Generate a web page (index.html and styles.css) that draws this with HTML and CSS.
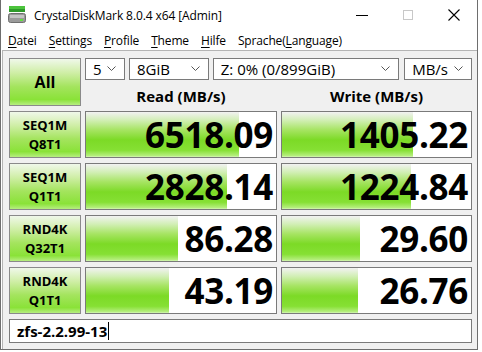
FILE: index.html
```html
<!DOCTYPE html>
<html>
<head>
<meta charset="utf-8">
<link rel="stylesheet" href="styles.css">
</head>
<body>
<div class="window">
  <div class="titlebar">
    <svg class="appicon" width="18" height="17" viewBox="0 0 18 17">
      <rect x="1" y="0" width="16" height="3" fill="#4cc43c"/>
      <rect x="1" y="3" width="16" height="3" fill="#2e9a2a"/>
      <rect x="0.5" y="7.5" width="17" height="9" rx="2" fill="#9a9a9a" stroke="#707070"/>
      <rect x="2" y="9" width="14" height="3" fill="#c4c4c4"/>
      <rect x="12" y="13" width="3" height="2" fill="#60e040"/>
    </svg>
    <span class="title">CrystalDiskMark 8.0.4 x64 [Admin]</span>
    <div class="controls">
      <svg width="46" height="30" viewBox="0 0 46 30"><line x1="17" y1="15.5" x2="29" y2="15.5" stroke="#000" stroke-width="1"/></svg>
      <svg width="46" height="30" viewBox="0 0 46 30"><rect x="18.5" y="10.5" width="9" height="9" fill="none" stroke="#c8c8c8"/></svg>
      <svg width="46" height="30" viewBox="0 0 46 30"><path d="M17.5 9.5 L28.5 20.5 M28.5 9.5 L17.5 20.5" stroke="#000" stroke-width="1.1"/></svg>
    </div>
  </div>
  <div class="menubar">
    <span><u>D</u>atei</span>
    <span><u>S</u>ettings</span>
    <span><u>P</u>rofile</span>
    <span><u>T</u>heme</span>
    <span><u>H</u>ilfe</span>
    <span>Sprache(<u>L</u>anguage)</span>
  </div>
  <div class="client">
    <div class="grid">
      <div class="btn all">All</div>
      <div class="top">
        <div class="selects">
          <div class="select w5"><span>5</span><svg class="chev" width="9" height="6" viewBox="0 0 9 6"><path d="M0.5 0.5 L4.5 4.5 L8.5 0.5" fill="none" stroke="#555"/></svg></div>
          <div class="select w8"><span>8GiB</span><svg class="chev" width="9" height="6" viewBox="0 0 9 6"><path d="M0.5 0.5 L4.5 4.5 L8.5 0.5" fill="none" stroke="#555"/></svg></div>
          <div class="select wz"><span>Z: 0% (0/899GiB)</span><svg class="chev" width="9" height="6" viewBox="0 0 9 6"><path d="M0.5 0.5 L4.5 4.5 L8.5 0.5" fill="none" stroke="#555"/></svg></div>
          <div class="select wu"><span>MB/s</span><svg class="chev" width="9" height="6" viewBox="0 0 9 6"><path d="M0.5 0.5 L4.5 4.5 L8.5 0.5" fill="none" stroke="#555"/></svg></div>
        </div>
        <div class="heads">
          <div class="head">Read (MB/s)</div>
          <div class="head">Write (MB/s)</div>
        </div>
      </div>

      <div class="btn lbl"><span>SEQ1M</span><span>Q8T1</span></div>
      <div class="val" style="background-size:153px 100%">6518.09</div>
      <div class="val" style="background-size:131px 100%">1405.22</div>

      <div class="btn lbl"><span>SEQ1M</span><span>Q1T1</span></div>
      <div class="val" style="background-size:141px 100%">2828.14</div>
      <div class="val" style="background-size:129px 100%">1224.84</div>

      <div class="btn lbl"><span>RND4K</span><span>Q32T1</span></div>
      <div class="val" style="background-size:92px 100%">86.28</div>
      <div class="val" style="background-size:78px 100%">29.60</div>

      <div class="btn lbl"><span>RND4K</span><span>Q1T1</span></div>
      <div class="val" style="background-size:83px 100%">43.19</div>
      <div class="val" style="background-size:76px 100%">26.76</div>

      <div class="comment">zfs-2.2.99-13<span class="caret"></span></div>
    </div>
  </div>
</div>
</body>
</html>
```
FILE: styles.css
```css
* { box-sizing: border-box; }
html, body { margin: 0; padding: 0; background: #ffffff; }
body { font-family: "Open Sans", "Noto Sans", sans-serif; color: #000; }

.window {
  width: 478px;
  height: 350px;
  border: 1px solid #6e6e6e;
  border-top: none;
  background: #fff;
  display: flex;
  flex-direction: column;
}

.titlebar {
  height: 30px;
  display: flex;
  align-items: center;
  padding-left: 7px;
}
.appicon { margin-top: -1px; }
.title {
  font-size: 12px;
  margin-left: 8px;
  letter-spacing: -0.1px;
}
.controls {
  margin-left: auto;
  display: flex;
  height: 30px;
}

.menubar {
  height: 20px;
  display: flex;
  align-items: center;
  font-size: 12px;
  padding-left: 7px;
  gap: 12px;
  letter-spacing: -0.15px;
}
.menubar u { text-underline-offset: 2px; }

.client {
  flex: 1;
  background: #f0f0f0;
  border-top: 1px solid #b4b4b4;
  border-left: 1px solid #b4b4b4;
  margin-left: 1px;
  padding: 7px 0 0 6px;
}

.grid {
  display: grid;
  grid-template-columns: 72px 192px 191px;
  grid-template-rows: 48px 47px 47px 47px 47px 24px;
  column-gap: 4px;
  row-gap: 5px;
}

.btn {
  border: 1px solid #8a8a8a;
  background: linear-gradient(to bottom, #f0f8ea 0%, #cfeea6 30%, #a4e45e 60%, #8ae238 88%, #b6ee80 100%);
  display: flex;
  flex-direction: column;
  align-items: center;
  justify-content: center;
  font-weight: 700;
}
.all { font-size: 16px; }
.lbl { font-size: 13px; line-height: 19px; gap: 0; }

.top {
  grid-column: 2 / 4;
  display: flex;
  flex-direction: column;
}
.selects {
  display: flex;
  height: 23px;
  gap: 4px;
}
.select {
  background: #fff;
  border: 1px solid #7a7a7a;
  display: flex;
  align-items: center;
  padding-left: 7px;
  padding-right: 8px;
  font-size: 15px;
}
.select span { flex: 1; }
.chev { flex: none; }
.w5 { width: 40px; }
.w8 { width: 80px; }
.wz { width: 187px; }
.wu { width: 68px; margin-left: 1px; }

.heads {
  flex: 1;
  display: grid;
  grid-template-columns: 192px 191px;
  column-gap: 4px;
}
.head {
  text-align: center;
  font-weight: 700;
  font-size: 15px;
  padding-top: 6px;
}

.val {
  border: 1px solid #7a7a7a;
  background-color: #fff;
  background-image: linear-gradient(to bottom, #f2f2f2 0%, #d2efb6 18%, #a6e462 40%, #7cda26 62%, #86e034 85%, #b4ee7c 97%, #d6f6b8 100%);
  background-repeat: no-repeat;
  display: flex;
  align-items: center;
  justify-content: flex-end;
  padding-right: 3px;
  font-weight: 700;
  font-size: 35px;
  letter-spacing: -0.3px;
}

.comment {
  grid-column: 1 / 4;
  background: #fff;
  border: 1px solid #7a7a7a;
  display: flex;
  align-items: center;
  padding-left: 7px;
  font-weight: 700;
  font-size: 15px;
}
.caret {
  display: inline-block;
  width: 1px;
  height: 18px;
  background: #000;
  margin-left: 1px;
}
```
